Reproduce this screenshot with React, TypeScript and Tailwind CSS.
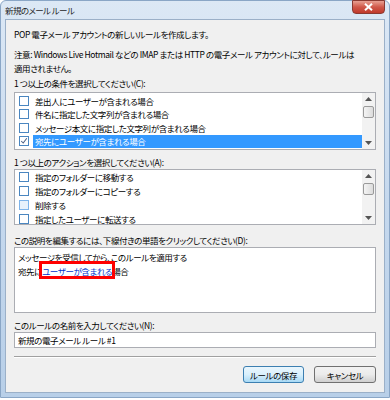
import React from "react";

const font = "font-['Noto_Sans_CJK_JP','Noto_Sans',sans-serif] [font-feature-settings:'palt']";

function Check({ checked, hot }: { checked?: boolean; hot?: boolean }) {
  return (
    <span
      className={`relative mr-[4px] inline-block h-[10px] w-[10px] shrink-0 border ${
        hot ? "border-[#7eb4ea] bg-[#e8f2fc]" : "border-[#4a86c0] bg-white"
      }`}
    >
      {checked && (
        <svg viewBox="0 0 10 10" className="absolute left-0 top-0 h-[8px] w-[8px]">
          <path d="M1.5 5 L4 7.5 L8.5 1.5" fill="none" stroke="#4d6185" strokeWidth="1.3" />
        </svg>
      )}
    </span>
  );
}

function Scrollbar({ thumbTop }: { thumbTop: number }) {
  return (
    <div className="flex w-[13px] shrink-0 flex-col items-center bg-[#f2f2f2]">
      <div className="flex h-[12px] items-center justify-center">
        <svg viewBox="0 0 7 4" className="h-[4px] w-[7px]">
          <path d="M0 4 L3.5 0 L7 4 Z" fill="#555" />
        </svg>
      </div>
      <div
        className="h-[12px] w-[11px] rounded-[2px] border border-[#9a9a9a] bg-gradient-to-r from-[#f4f4f4] to-[#dcdcdc]"
        style={{ marginTop: thumbTop }}
      />
      <div className="flex-1" />
      <div className="flex h-[12px] items-center justify-center">
        <svg viewBox="0 0 7 4" className="h-[4px] w-[7px]">
          <path d="M0 0 L3.5 4 L7 0 Z" fill="#555" />
        </svg>
      </div>
    </div>
  );
}

type Row = { text: string; checked?: boolean; selected?: boolean; hot?: boolean };

function CheckList({ rows, rowH, h, pt }: { rows: Row[]; rowH: string; h: string; pt: string }) {
  return (
    <div className={`flex ${h} border border-[#abadb3] bg-white`}>
      <div className={`flex flex-1 flex-col ${pt}`}>
        {rows.map((r) => (
          <div key={r.text} className={`flex ${rowH} items-center pl-[4px]`}>
            <Check checked={r.checked} hot={r.hot} />
            <span
              className={`flex h-full flex-1 items-center pl-[2px] ${
                r.selected ? "bg-[#3399ff] text-white" : ""
              }`}
            >
              {r.text}
            </span>
          </div>
        ))}
      </div>
      <Scrollbar thumbTop={1} />
    </div>
  );
}

export default function App() {
  return (
    <div className={`h-[400px] w-[390px] bg-white ${font} text-[8.5px] leading-[14px] tracking-[-0.4px] text-black`}>
      <div className="relative h-[398px] w-[390px] rounded-t-[6px] border border-[#8aa6c6] bg-gradient-to-b from-[#dce8f5] via-[#c6d9ee] to-[#b8cfe8]">
        {/* title bar */}
        <div className="flex h-[18px] items-center pl-[4px] tracking-[-0.6px] text-[#1e1e1e]">新規のメール ルール</div>

        {/* close button */}
        <div className="absolute right-[4px] top-[-1px] flex h-[14px] w-[33px] items-center justify-center rounded-b-[4px] border border-[#8a3a32] bg-gradient-to-b from-[#e8a093] via-[#d0584a] to-[#c0392b]">
          <svg viewBox="0 0 9 8" className="h-[8px] w-[9px]">
            <path d="M1 0.8 L8 7.2 M8 0.8 L1 7.2" stroke="#ffffff" strokeWidth="2" />
          </svg>
        </div>

        {/* client area */}
        <div className="mx-[4px] flex h-[374px] flex-col border border-[#9bb0c8] bg-[#f0f0f0] px-[8px] pt-[7px]">
          <div>POP 電子メール アカウントの新しいルールを作成します。</div>
          <div className="mt-[6px]">
            <div className="whitespace-nowrap">
              注意: Windows Live Hotmail などの IMAP または HTTP の電子メール アカウントに対して、ルールは
            </div>
            <div>適用されません。</div>
          </div>
          <div className="mt-[1px]">1 つ以上の条件を選択してください(C):</div>
          <div className="mt-[2px]">
            <CheckList
              h="h-[58px]"
              pt="pt-[1px]"
              rowH="h-[13.5px]"
              rows={[
                { text: "差出人にユーザーが含まれる場合" },
                { text: "件名に指定した文字列が含まれる場合" },
                { text: "メッセージ本文に指定した文字列が含まれる場合" },
                { text: "宛先にユーザーが含まれる場合", checked: true, selected: true },
              ]}
            />
          </div>
          <div className="mt-[5px]">1 つ以上のアクションを選択してください(A):</div>
          <CheckList
            h="h-[56px]"
            pt="pt-0"
            rowH="h-[14px]"
            rows={[
              { text: "指定のフォルダーに移動する" },
              { text: "指定のフォルダーにコピーする" },
              { text: "削除する", hot: true },
              { text: "指定したユーザーに転送する" },
            ]}
          />
          <div className="mt-[8px]">この説明を編集するには、下線付きの単語をクリックしてください(D):</div>
          <div className="h-[66px] border border-[#abadb3] bg-white pl-[3px] pt-[2px]">
            <div>メッセージを受信してから、このルールを適用する</div>
            <div>
              宛先に
              <span className="relative inline-block text-[#0033cc] underline">
                ユーザーが含まれる
                <span className="absolute bottom-[-1px] left-[-3px] right-[-3px] top-[-3px] border-[3px] border-[#ff0000]" />
              </span>
              場合
            </div>
          </div>
          <div className="mt-[5px]">このルールの名前を入力してください(N):</div>
          <div className="flex h-[16px] items-center border border-[#abadb3] bg-white pl-[3px]">新規の電子メール ルール #1</div>
          <div className="mt-[8px] h-[1px] bg-[#a0a0a0]" />
          <div className="h-[1px] bg-white" />
          <div className="mt-[8px] flex justify-end gap-[10px]">
            <div className="flex h-[17px] w-[61px] items-center justify-center rounded-[3px] border border-[#3c7fb1] bg-gradient-to-b from-[#eaf6fd] via-[#d9f0fc] to-[#a7d9f5]">
              ルールの保存
            </div>
            <div className="flex h-[17px] w-[62px] items-center justify-center rounded-[3px] border border-[#707070] bg-gradient-to-b from-[#f2f2f2] via-[#ebebeb] to-[#cfcfcf]">
              キャンセル
            </div>
          </div>
        </div>
      </div>
    </div>
  );
}
